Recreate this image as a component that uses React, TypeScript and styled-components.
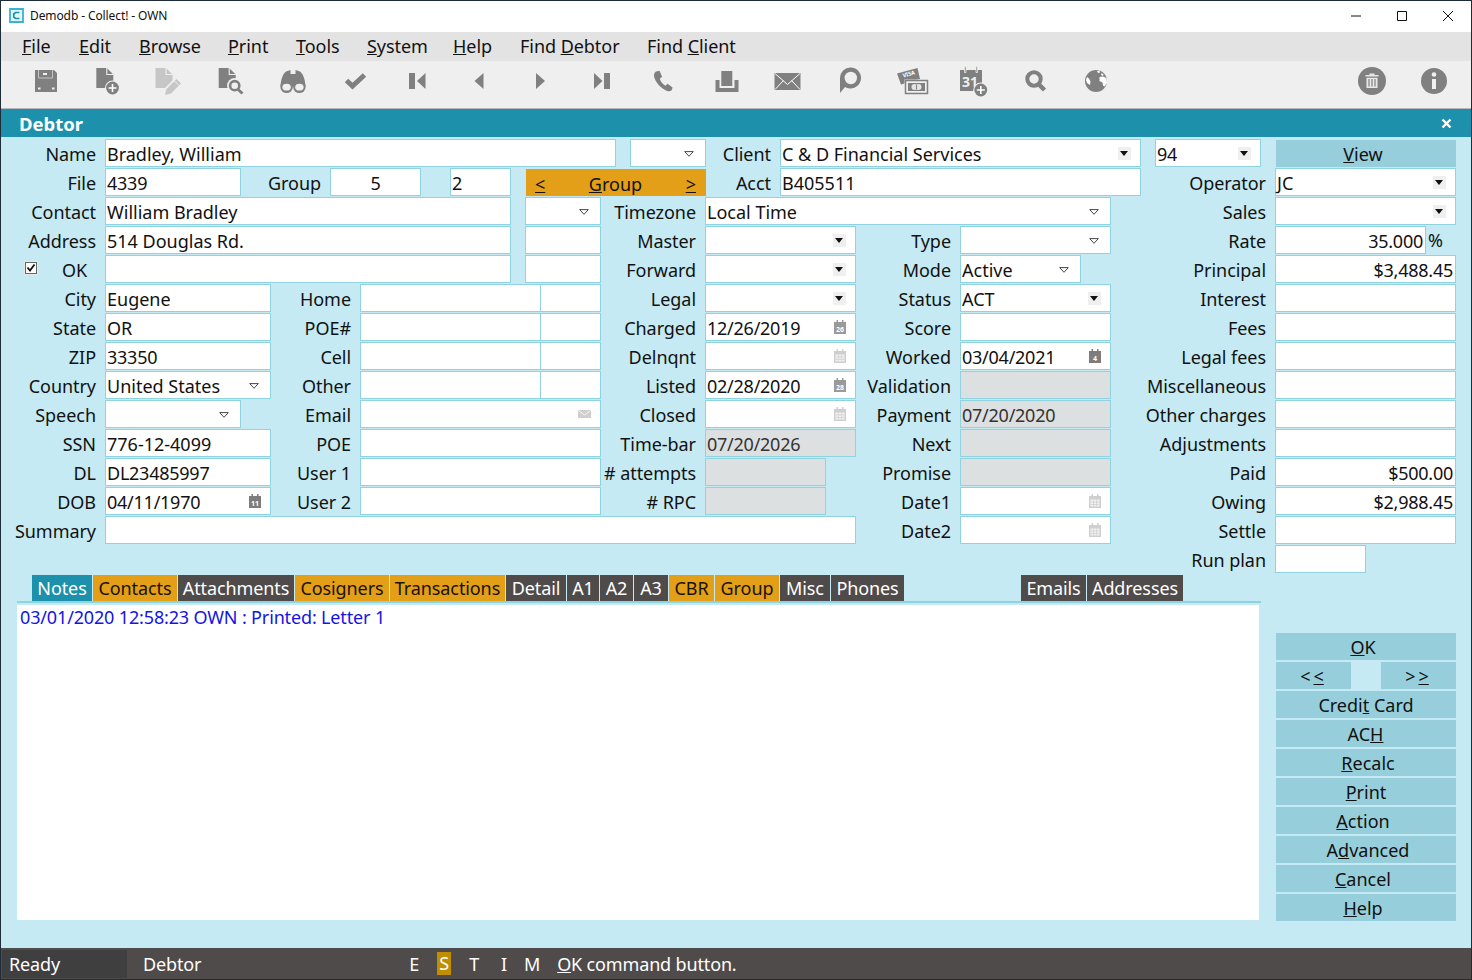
import React from 'react'
import styled, { createGlobalStyle } from 'styled-components'

const GlobalStyle = createGlobalStyle`
	html, body {
		margin: 0;
		padding: 0;
		background: #c5eaf3;
		font-family: "Noto Sans", "Open Sans", sans-serif;
	}
`

const ICON = `#808080`
const ICON_BG = `#efefef`
const FIELD_LINE = `#8ed3df`
const ORANGE = `#e39f17`
const TEAL = `#1d91ab`
const DARK = `#4f4b4a`

const WindowFrame = styled.div`
	width: 1472px;
	height: 980px;
	box-sizing: border-box;
	border: 1px solid #1f2d3a;
	border-bottom: 1px solid #2a2a2a;
	display: flex;
	flex-direction: column;
	overflow: hidden;
	font-size: 18px;
	color: #111;
`

const TitleBar = styled.div`
	height: 31px;
	box-sizing: border-box;
	flex-shrink: 0;
	background: #fff;
	display: flex;
	align-items: center;
	padding: 0 0 2px 8px;
	font-size: 12px;
	letter-spacing: -0.1px;
	color: #111;
`

const AppName = styled.span`
	margin-left: 6px;
	flex: 1;
`

const WindowControl = styled.div`
	width: 46px;
	height: 29px;
	display: flex;
	align-items: center;
	justify-content: center;
`

const MenuBar = styled.div`
	height: 29px;
	box-sizing: border-box;
	flex-shrink: 0;
	background: #e3e3e3;
	display: flex;
	align-items: center;
	padding: 0 0 2px 21px;
	letter-spacing: -0.05px;
`

const MenuItem = styled.span<{ $w: number }>`
	width: ${({ $w }) => $w}px;
	flex-shrink: 0;
	white-space: nowrap;
`

const Toolbar = styled.div`
	height: 47px;
	box-sizing: content-box;
	flex-shrink: 0;
	background: ${ICON_BG};
	border-bottom: 1px solid #b9b4bd;
	display: flex;
	align-items: flex-start;
	padding-left: 14px;
	padding-right: 6px;
`

const ToolButton = styled.div`
	width: 61.8px;
	height: 36px;
	margin-top: 2px;
	display: flex;
	justify-content: center;
	flex-shrink: 0;
`

const ToolSpacer = styled.div`
	flex: 1;
`

const DialogHead = styled.div`
	height: 28px;
	flex-shrink: 0;
	background: ${TEAL};
	color: #fff;
	font-weight: 700;
	font-size: 18.5px;
	display: flex;
	align-items: center;
	justify-content: space-between;
	padding: 0 19px 0 18px;
`

const Dialog = styled.div`
	flex: 1;
	min-height: 0;
	background: #c5eaf3;
	padding-top: 2px;
	display: flex;
	flex-direction: column;
`

const FormRow = styled.div`
	height: 28px;
	margin-bottom: 1px;
	display: flex;
	flex-shrink: 0;
`

const Label = styled.div<{ $w: number }>`
	width: ${({ $w }) => $w}px;
	flex-shrink: 0;
	text-align: right;
	line-height: 31px;
	white-space: nowrap;
	letter-spacing: -0.05px;
	display: flex;
	justify-content: flex-end;
`

const Field = styled.div<{
	$w: number
	$ml: number
	$grey?: boolean
	$right?: boolean
	$center?: boolean
	$tight?: boolean
}>`
	position: relative;
	box-sizing: border-box;
	flex-shrink: 0;
	width: ${({ $w }) => $w}px;
	height: 28px;
	margin-left: ${({ $ml }) => $ml}px;
	background: ${({ $grey }) => ($grey ? `#dde0e0` : `#fff`)};
	color: ${({ $grey }) => ($grey ? `#333` : `#111`)};
	border: 1px solid ${FIELD_LINE};
	padding: 0 ${({ $right }) => ($right ? `2px` : `1px`)} 0 1px;
	line-height: 29px;
	white-space: nowrap;
	letter-spacing: ${({ $tight }) => ($tight ? `-0.25px` : `0`)};
	text-align: ${({ $right, $center }) => ($right ? `right` : $center ? `center` : `left`)};
`

const SolidDrop = styled.span`
	position: absolute;
	right: 9px;
	top: 7px;
	width: 13px;
	height: 13px;
	background: #efefef;

	&::after {
		content: '';
		position: absolute;
		left: 2px;
		top: 4px;
		border-left: 4px solid transparent;
		border-right: 4px solid transparent;
		border-top: 5px solid #111;
	}
`

const FieldIcon = styled.svg<{ $right: number }>`
	position: absolute;
	right: ${({ $right }) => $right}px;
	top: 6px;
`

const HollowDrop = styled.svg`
	position: absolute;
	right: 11px;
	top: 11px;
`

const PercentSign = styled.span`
	line-height: 29px;
	margin-left: 2px;
`

const CheckBox = styled.div<{ $ml: number }>`
	width: 12px;
	height: 12px;
	margin-left: ${({ $ml }) => $ml}px;
	margin-top: 7px;
	flex-shrink: 0;
	box-sizing: border-box;
	background: #fff;
	border: 1px solid #666;
	outline: 1px solid #e8e8e8;
	display: flex;
	align-items: center;
	justify-content: center;
`

const FlatButton = styled.div<{ $w: number; $ml?: number; $nudge?: number }>`
	box-sizing: border-box;
	width: ${({ $w }) => $w}px;
	margin-left: ${({ $ml }) => $ml ?? 0}px;
	flex-shrink: 0;
	height: 27px;
	margin-top: 1px;
	background: #96cfdb;
	text-align: center;
	line-height: 29px;
	color: #111;
	padding-left: ${({ $nudge }) => Math.max($nudge ?? 0, 0)}px;
	padding-right: ${({ $nudge }) => Math.max(-($nudge ?? 0), 0)}px;
`

const SpacedKey = styled.u`
	margin-left: 3px;
`

const GroupButton = styled.div<{ $w: number; $ml: number }>`
	box-sizing: border-box;
	width: ${({ $w }) => $w}px;
	margin-left: ${({ $ml }) => $ml}px;
	flex-shrink: 0;
	height: 27px;
	margin-top: 1px;
	background: ${ORANGE};
	display: flex;
	justify-content: space-between;
	padding: 0 10px 0 9px;
	line-height: 30px;
`

const Lower = styled.div`
	display: flex;
	padding-left: 16px;
`

const NotesColumn = styled.div`
	width: 1244px;
	flex-shrink: 0;
	display: flex;
	flex-direction: column;
`

const TabStrip = styled.div`
	height: 26px;
	margin-top: 1px;
	padding-left: 15px;
	display: flex;
	gap: 1px;
	border-bottom: 2px solid ${FIELD_LINE};
`

const Tab = styled.div<{ $w: number; $tone: 'teal' | 'orange' | 'dark'; $ml?: number }>`
	width: ${({ $w }) => $w}px;
	margin-left: ${({ $ml }) => $ml ?? 0}px;
	flex-shrink: 0;
	text-align: center;
	line-height: 27px;
	white-space: nowrap;
	letter-spacing: -0.1px;
	background: ${({ $tone }) => ($tone === `teal` ? TEAL : $tone === `orange` ? ORANGE : DARK)};
	color: ${({ $tone }) => ($tone === `orange` ? `#1a1200` : `#fff`)};
`

const NotesBox = styled.div`
	margin-top: 2px;
	width: 1242px;
	height: 315px;
	background: #fff;
	color: #1414e6;
	padding: 0 3px;
	box-sizing: border-box;
	line-height: 25px;
	letter-spacing: -0.15px;
`

const ActionColumn = styled.div`
	width: 180px;
	margin-left: 15px;
	padding-top: 58px;
	display: flex;
	flex-direction: column;
	gap: 1px;
`

const ActionPair = styled.div`
	display: flex;
	justify-content: space-between;
`

const StatusBar = styled.div`
	height: 31px;
	flex-shrink: 0;
	background: ${DARK};
	color: #fff;
	display: flex;
	align-items: center;
	padding-left: 1px;
	letter-spacing: -0.15px;
`

const StatusReady = styled.div`
	width: 118px;
	height: 28px;
	background: #3f3f3f;
	padding-left: 7px;
	line-height: 29px;
`

const StatusText = styled.span<{ $x: number }>`
	margin-left: ${({ $x }) => $x}px;
	white-space: nowrap;
`

const StatusFlag = styled.span`
	margin-left: 18px;
	width: 14px;
	height: 23px;
	line-height: 23px;
	text-align: center;
	background: #c18e00;
`

const ToolIcon: React.FC<{ children: React.ReactNode }> = ({ children }) => (
	<svg width="36" height="36" viewBox="0 0 36 36">
		{children}
	</svg>
)

const PlusBadge: React.FC<{ x: number; y: number }> = ({ x, y }) => (
	<>
		<circle cx={x} cy={y} r="7.6" fill={ICON_BG} />
		<circle cx={x} cy={y} r="6.4" fill={ICON} />
		<path d={`M${x - 4} ${y}h8M${x} ${y - 4}v8`} stroke="#fff" strokeWidth="1.6" />
	</>
)

const DocShape: React.FC<{ x: number; fill: string }> = ({ x, fill }) => (
	<>
		<path d={`M${x} 5h10.5l6.5 6.5V25H${x}z`} fill={fill} />
		<path d={`M${x + 10.5} 5v6.5H${x + 17}`} fill="none" stroke={ICON_BG} strokeWidth="1.1" />
	</>
)

const toolIcons: React.ReactNode[] = [
	<>
		<path d="M7 7h19l3 3v19H7z" fill={ICON} />
		<path d="M10.500 7v8h14V7" fill="none" stroke="#c4c4c4" strokeWidth="1" />
		<path d="M15 10h4v2h-4z" fill={ICON_BG} />
		<path d="M10 24.500h2.500v2H10zM24 24.500h2.500v2H24z" fill={ICON_BG} />
	</>,
	<>
		<DocShape x={6.3} fill={ICON} />
		<PlusBadge x={22.5} y={25} />
	</>,
	<>
		<DocShape x={4.5} fill="#c6c6c6" />
		<path d="M12 34l1.500-8.500 12-12 6.500 6.500-12 12z" fill={ICON_BG} />
		<path d="M14 32l1.500-6L25.500 16l4.500 4.500L20 30.500z" fill="#c6c6c6" />
		<path d="M23.500 18l4.500 4.500" stroke={ICON_BG} strokeWidth="0.900" />
	</>,
	<>
		<DocShape x={5.7} fill={ICON} />
		<circle cx="21.7" cy="22.700" r="7.600" fill={ICON_BG} />
		<circle cx="21.7" cy="22.700" r="4.600" fill={ICON_BG} stroke={ICON} strokeWidth="2.600" />
		<path d="M25 26.500l4.500 4" stroke={ICON} strokeWidth="3" />
	</>,
	<>
		<path
			d="M5.500 23C6 16 8 10.500 11 8.500L15.500 7v4h5V7L25 8.500c3 2 5 7.500 5.500 14.500z"
			fill={ICON}
		/>
		<circle cx="11.600" cy="23.700" r="6.300" fill={ICON} />
		<circle cx="24.400" cy="23.700" r="6.300" fill={ICON} />
		<ellipse cx="11.600" cy="24.200" rx="4.200" ry="3.400" fill={ICON_BG} />
		<ellipse cx="24.400" cy="24.200" rx="4.200" ry="3.400" fill={ICON_BG} />
	</>,
	<path d="M9.500 17.500l6 5.500L27.500 12" fill="none" stroke={ICON} strokeWidth="5" />,
	<path d="M10 10h6v16h-6zM26.500 10v16L18 18z" fill={ICON} />,
	<path d="M23.500 10v16L14.500 18z" fill={ICON} />,
	<path d="M14 10v16l9-8z" fill={ICON} />,
	<path d="M10 10v16l8.5-8zM20 10h6v16h-6z" fill={ICON} />,
	<path
		d="M10 8.5l3.5-.7 2.6 6-2.3 2c1 3 3.2 5.8 5.6 7l2.2-2 5 3.6-.9 2.8c-1.1 1-3 1.2-4.6.7C14.500 25.200 8.600 18.400 8 13c-.2-2 .6-3.500 2-4.500z"
		fill={ICON}
	/>,
	<path d="M13.300 8h11v15h-11zM7.500 17h4v8h15v-8h4v12h-23z" fill={ICON} />,
	<>
		<path d="M5.500 10h26v17h-26z" fill={ICON} />
		<path d="M6 10.500l12.500 11 12.500-11M6 26.500l8.500-9M31 26.500l-8.500-9" fill="none" stroke="#fff" strokeWidth="1" />
	</>,
	<>
		<path d="M19.500 4.500a10.500 10.500 0 1 1-5.500 19.400L9 30V15A10.500 10.500 0 0 1 19.500 4.500z" fill={ICON} />
		<circle cx="19.800" cy="15" r="6.200" fill={ICON_BG} />
	</>,
	<>
		<path d="M4 10.500L24.500 5l2.500 11-19 5.500z" fill={ICON} />
		<text x="10" y="14.500" fontSize="5.500" fontWeight="700" fill="#fff" transform="rotate(-15 10 14)">
			VISA
		</text>
		<path d="M11.500 16.500h24v15h-24z" fill={ICON_BG} />
		<path d="M12.500 17.500h22v13h-22z" fill="none" stroke={ICON} strokeWidth="1.500" />
		<path d="M15 20h17v8H15z" fill={ICON} />
		<circle cx="21.500" cy="24" r="3" fill="#e4e4e4" />
		<circle cx="25.500" cy="24" r="3" fill="#e4e4e4" />
		<path d="M23.500 21.800v4.400" stroke={ICON} strokeWidth="1" />
	</>,
	<>
		<path d="M5 7h22v21H5z" fill={ICON} />
		<path d="M9.500 3.500h1.500v6H9.500zM21 3.500h1.500v6H21z" fill={ICON} stroke={ICON_BG} strokeWidth="0.800" />
		<text x="7" y="24" fontSize="14" fontWeight="700" fill={ICON_BG}>
			31
		</text>
		<PlusBadge x={25.800} y={27} />
	</>,
	<>
		<circle cx="17" cy="16" r="6.700" fill="none" stroke={ICON} strokeWidth="4" />
		<path d="M21.500 21l6 6" stroke={ICON} strokeWidth="4.500" />
	</>,
	<>
		<circle cx="18" cy="18" r="11" fill={ICON} />
		<path
			d="M19 8l2.500-.5.500 2-2 .5zM23.500 10l2 1.500-.5 1.500-2-1zM21.500 14l3.500-.5 3.500 1.500.5 5-2.500 3.500-1.500-1-.5-3-3-1.500zM9 14l2 1.500 1.500 3L12 22l-3-2-1-3z"
			fill="#fff"
		/>
	</>,
]

const TrashIcon = (
	<ToolIcon>
		<circle cx="18" cy="18" r="14" fill={ICON} />
		<path d="M11.500 12h13v1.600h-13zM15.500 10.400h5V12h-5z" fill="#e8e8e8" />
		<path d="M12.500 14.800h11V25h-11z" fill="#e8e8e8" />
		<path d="M15 16v7.500M18 16v7.500M21 16v7.500" stroke={ICON} strokeWidth="1.200" />
	</ToolIcon>
)

const InfoIcon = (
	<ToolIcon>
		<circle cx="18" cy="18" r="13" fill={ICON} />
		<circle cx="18" cy="11.500" r="2.300" fill="#f0f0f0" />
		<path d="M16 16h4v10h-4z" fill="#f0f0f0" />
	</ToolIcon>
)

const Calendar: React.FC<{ day?: string; dark?: boolean }> = ({ day, dark }) => {
	const tone = dark ? `#7d7d7d` : day ? `#9a9a9a` : `#cfcfcf`
	return (
		<FieldIcon $right={9} width="12" height="14" viewBox="0 0 12 14">
			<path d="M0 2h12v12H0z" fill={tone} />
			<path d="M2.500 0h1.500v3H2.500zM8 0h1.500v3H8z" fill={tone} />
			{day ? (
				<text x="6" y="12" textAnchor="middle" fontSize="7" fontWeight="700" fill="#fff" letterSpacing="0">
					{day}
				</text>
			) : (
				<path d="M1.500 5.500h9v7h-9z" fill="#f1f1f1" />
			)}
			{!day && <path d="M1.500 8h9M1.500 10.500h9M4.500 5.500v7M7.500 5.500v7" stroke={tone} strokeWidth="0.700" />}
		</FieldIcon>
	)
}

const Envelope = (
	<FieldIcon $right={9} width="13" height="14" viewBox="0 0 13 14">
		<path d="M0 3h13v8H0z" fill="#cfcfcf" />
		<path d="M.500 3.500l6 4.500 6-4.500" fill="none" stroke="#fff" strokeWidth="0.800" />
	</FieldIcon>
)

const Hollow = (
	<HollowDrop width="10" height="6" viewBox="0 0 10 6">
		<path d="M.700.600h8.600L5 5.300z" fill="#fff" stroke="#333" strokeWidth="0.900" />
	</HollowDrop>
)

type CellDef =
	| { kind: 'label'; end: number; text: string }
	| {
			kind: 'field'
			from: number
			to: number
			text?: string
			grey?: boolean
			right?: boolean
			center?: boolean
			extra?: React.ReactNode
	  }
	| { kind: 'check'; from: number }
	| { kind: 'view'; from: number; to: number }
	| { kind: 'group'; from: number; to: number }
	| { kind: 'percent' }

const L = (text: string, end: number): CellDef => ({ kind: 'label', text, end })
const F = (from: number, to: number, text = ``, extra?: React.ReactNode): CellDef => ({
	kind: 'field',
	from,
	to,
	text,
	extra,
})
const G = (from: number, to: number, text = ``): CellDef => ({ kind: 'field', from, to, text, grey: true })
const M = (from: number, to: number, text = ``): CellDef => ({ kind: 'field', from, to, text, right: true })

const solid = <SolidDrop />

const rows: CellDef[][] = [
	[
		L(`Name`, 96),
		F(105, 616, `Bradley, William`),
		F(630, 706, ``, Hollow),
		L(`Client`, 771),
		F(780, 1141, `C & D Financial Services`, solid),
		F(1155, 1261, `94`, solid),
		{ kind: 'view', from: 1276, to: 1456 },
	],
	[
		L(`File`, 96),
		F(105, 241, `4339`),
		L(`Group`, 321),
		{ kind: 'field', from: 330, to: 421, text: `5`, center: true },
		F(450, 511, `2`),
		{ kind: 'group', from: 526, to: 706 },
		L(`Acct`, 771),
		F(780, 1141, `B405511`),
		L(`Operator`, 1266),
		F(1275, 1456, `JC`, solid),
	],
	[
		L(`Contact`, 96),
		F(105, 511, `William Bradley`),
		F(525, 601, ``, Hollow),
		L(`Timezone`, 696),
		F(705, 1111, `Local Time`, Hollow),
		L(`Sales`, 1266),
		F(1275, 1456, ``, solid),
	],
	[
		L(`Address`, 96),
		F(105, 511, `514 Douglas Rd.`),
		F(525, 601),
		L(`Master`, 696),
		F(705, 856, ``, solid),
		L(`Type`, 951),
		F(960, 1111, ``, Hollow),
		L(`Rate`, 1266),
		M(1275, 1426, `35.000`),
		{ kind: 'percent' },
	],
	[
		{ kind: 'check', from: 25 },
		L(`OK`, 87),
		F(105, 511),
		F(525, 601),
		L(`Forward`, 696),
		F(705, 856, ``, solid),
		L(`Mode`, 951),
		F(960, 1081, `Active`, Hollow),
		L(`Principal`, 1266),
		M(1275, 1456, `$3,488.45`),
	],
	[
		L(`City`, 96),
		F(105, 271, `Eugene`),
		L(`Home`, 351),
		F(360, 541),
		F(540, 601),
		L(`Legal`, 696),
		F(705, 856, ``, solid),
		L(`Status`, 951),
		F(960, 1111, `ACT`, solid),
		L(`Interest`, 1266),
		F(1275, 1456),
	],
	[
		L(`State`, 96),
		F(105, 271, `OR`),
		L(`POE#`, 351),
		F(360, 541),
		F(540, 601),
		L(`Charged`, 696),
		F(705, 856, `12/26/2019`, <Calendar day="26" />),
		L(`Score`, 951),
		F(960, 1111),
		L(`Fees`, 1266),
		F(1275, 1456),
	],
	[
		L(`ZIP`, 96),
		F(105, 271, `33350`),
		L(`Cell`, 351),
		F(360, 541),
		F(540, 601),
		L(`Delnqnt`, 696),
		F(705, 856, ``, <Calendar />),
		L(`Worked`, 951),
		F(960, 1111, `03/04/2021`, <Calendar day="4" dark />),
		L(`Legal fees`, 1266),
		F(1275, 1456),
	],
	[
		L(`Country`, 96),
		F(105, 271, `United States`, Hollow),
		L(`Other`, 351),
		F(360, 541),
		F(540, 601),
		L(`Listed`, 696),
		F(705, 856, `02/28/2020`, <Calendar day="28" />),
		L(`Validation`, 951),
		G(960, 1111),
		L(`Miscellaneous`, 1266),
		F(1275, 1456),
	],
	[
		L(`Speech`, 96),
		F(105, 241, ``, Hollow),
		L(`Email`, 351),
		F(360, 601, ``, Envelope),
		L(`Closed`, 696),
		F(705, 856, ``, <Calendar />),
		L(`Payment`, 951),
		G(960, 1111, `07/20/2020`),
		L(`Other charges`, 1266),
		F(1275, 1456),
	],
	[
		L(`SSN`, 96),
		F(105, 271, `776-12-4099`),
		L(`POE`, 351),
		F(360, 601),
		L(`Time-bar`, 696),
		G(705, 856, `07/20/2026`),
		L(`Next`, 951),
		G(960, 1111),
		L(`Adjustments`, 1266),
		F(1275, 1456),
	],
	[
		L(`DL`, 96),
		F(105, 271, `DL23485997`),
		L(`User 1`, 351),
		F(360, 601),
		L(`# attempts`, 696),
		G(705, 826),
		L(`Promise`, 951),
		G(960, 1111),
		L(`Paid`, 1266),
		M(1275, 1456, `$500.00`),
	],
	[
		L(`DOB`, 96),
		F(105, 271, `04/11/1970`, <Calendar day="11" dark />),
		L(`User 2`, 351),
		F(360, 601),
		L(`# RPC`, 696),
		G(705, 826),
		L(`Date1`, 951),
		F(960, 1111, ``, <Calendar />),
		L(`Owing`, 1266),
		M(1275, 1456, `$2,988.45`),
	],
	[
		L(`Summary`, 96),
		F(105, 856),
		L(`Date2`, 951),
		F(960, 1111, ``, <Calendar />),
		L(`Settle`, 1266),
		F(1275, 1456),
	],
	[L(`Run plan`, 1266), F(1275, 1366)],
]

// Noto digits run wider than the original UI font, letters do not
const isNumeric = (text?: string): boolean => !!text && /^[\dDL/$,.]+$/.test(text)

// cells are listed by their x on the form, widths come from the running cursor
const renderRow = (cells: CellDef[], rowIndex: number): React.ReactNode => {
	let cursor = 1
	return (
		<FormRow key={rowIndex}>
			{cells.map((cell, i) => {
				const start = cursor
				if (cell.kind === 'label') {
					cursor = cell.end
					return (
						<Label key={i} $w={cell.end - start}>
							{cell.text}
						</Label>
					)
				}
				if (cell.kind === 'check') {
					cursor = cell.from + 12
					return (
						<CheckBox key={i} $ml={cell.from - start}>
							<svg width="10" height="10" viewBox="0 0 10 10">
								<path d="M1.500 4.500l2.500 3 4.500-6" fill="none" stroke="#111" strokeWidth="1.800" />
							</svg>
						</CheckBox>
					)
				}
				if (cell.kind === 'percent') {
					return <PercentSign key={i}>%</PercentSign>
				}
				cursor = cell.to
				if (cell.kind === 'view') {
					return (
						<FlatButton key={i} $w={cell.to - cell.from} $ml={cell.from - start} $nudge={-6}>
							<u>V</u>iew
						</FlatButton>
					)
				}
				if (cell.kind === 'group') {
					return (
						<GroupButton key={i} $w={cell.to - cell.from} $ml={cell.from - start}>
							<u>&lt;</u>
							<span>
								<u>G</u>roup
							</span>
							<u>&gt;</u>
						</GroupButton>
					)
				}
				return (
					<Field
						key={i}
						$w={cell.to - cell.from}
						$ml={cell.from - start}
						$grey={cell.grey}
						$right={cell.right}
						$center={cell.center}
						$tight={isNumeric(cell.text)}
					>
						{cell.text}
						{cell.extra}
					</Field>
				)
			})}
		</FormRow>
	)
}

const menu: [React.ReactNode, number][] = [
	[<><u>F</u>ile</>, 57],
	[<><u>E</u>dit</>, 60],
	[<><u>B</u>rowse</>, 89],
	[<><u>P</u>rint</>, 68],
	[<><u>T</u>ools</>, 71],
	[<><u>S</u>ystem</>, 86],
	[<><u>H</u>elp</>, 67],
	[<>Find <u>D</u>ebtor</>, 127],
	[<>Find <u>C</u>lient</>, 110],
]

const tabs: { text: string; w: number; tone: 'teal' | 'orange' | 'dark'; ml?: number }[] = [
	{ text: `Notes`, w: 60, tone: `teal` },
	{ text: `Contacts`, w: 84, tone: `orange` },
	{ text: `Attachments`, w: 116, tone: `dark` },
	{ text: `Cosigners`, w: 94, tone: `orange` },
	{ text: `Transactions`, w: 115, tone: `orange` },
	{ text: `Detail`, w: 60, tone: `dark` },
	{ text: `A1`, w: 32, tone: `dark` },
	{ text: `A2`, w: 33, tone: `dark` },
	{ text: `A3`, w: 34, tone: `dark` },
	{ text: `CBR`, w: 45, tone: `orange` },
	{ text: `Group`, w: 64, tone: `orange` },
	{ text: `Misc`, w: 50, tone: `dark` },
	{ text: `Phones`, w: 73, tone: `dark` },
	{ text: `Emails`, w: 65, tone: `dark`, ml: 116 },
	{ text: `Addresses`, w: 96, tone: `dark` },
]

// the text sits off centre on most of these buttons in the original
const actions: [React.ReactNode, number][] = [
	[<>Credi<u>t</u> Card</>, 0],
	[<>AC<u>H</u></>, -1],
	[<><u>R</u>ecalc</>, 4],
	[<><u>P</u>rint</>, 0],
	[<><u>A</u>ction</>, -6],
	[<>A<u>d</u>vanced</>, 4],
	[<><u>C</u>ancel</>, -6],
	[<><u>H</u>elp</>, -6],
]

export default function App(): React.ReactElement {
	return (
		<>
			<GlobalStyle />
			<WindowFrame>
				<TitleBar>
					<svg width="15" height="15" viewBox="0 0 15 15">
						<path d="M1 1h13v13H1z" fill="#e4f6fa" stroke="#37b4cf" strokeWidth="1.800" />
						<path d="M10.500 4.500H6.500L4.800 6v3l1.700 1.500h4" fill="none" stroke="#1d91ab" strokeWidth="1.700" />
					</svg>
					<AppName>Demodb - Collect! - OWN</AppName>
					<WindowControl>
						<svg width="12" height="12" viewBox="0 0 12 12">
							<path d="M1 6h10" stroke="#111" strokeWidth="1" />
						</svg>
					</WindowControl>
					<WindowControl>
						<svg width="12" height="12" viewBox="0 0 12 12">
							<path d="M1.500 1.500h9v9h-9z" fill="none" stroke="#111" strokeWidth="1" />
						</svg>
					</WindowControl>
					<WindowControl>
						<svg width="12" height="12" viewBox="0 0 12 12">
							<path d="M1 1l10 10M11 1L1 11" stroke="#111" strokeWidth="1" />
						</svg>
					</WindowControl>
				</TitleBar>
				<MenuBar>
					{menu.map(([label, w], i) => (
						<MenuItem key={i} $w={w}>
							{label}
						</MenuItem>
					))}
				</MenuBar>
				<Toolbar>
					{toolIcons.map((icon, i) => (
						<ToolButton key={i}>
							<ToolIcon>{icon}</ToolIcon>
						</ToolButton>
					))}
					<ToolSpacer />
					<ToolButton>{TrashIcon}</ToolButton>
					<ToolButton>{InfoIcon}</ToolButton>
				</Toolbar>
				<DialogHead>
					Debtor
					<svg width="11" height="11" viewBox="0 0 11 11">
						<path d="M1.500 1.500l8 8M9.500 1.500l-8 8" stroke="#fff" strokeWidth="2.400" />
					</svg>
				</DialogHead>
				<Dialog>
					{rows.map(renderRow)}
					<Lower>
						<NotesColumn>
							<TabStrip>
								{tabs.map(t => (
									<Tab key={t.text} $w={t.w} $tone={t.tone} $ml={t.ml}>
										{t.text}
									</Tab>
								))}
							</TabStrip>
							<NotesBox>03/01/2020 12:58:23 OWN : Printed: Letter 1</NotesBox>
						</NotesColumn>
						<ActionColumn>
							<FlatButton $w={180} $nudge={-6}>
								<u>O</u>K
							</FlatButton>
							<ActionPair>
								<FlatButton $w={75} $nudge={-3}>
									&lt;<SpacedKey>&lt;</SpacedKey>
								</FlatButton>
								<FlatButton $w={75} $nudge={-3}>
									&gt;<SpacedKey>&gt;</SpacedKey>
								</FlatButton>
							</ActionPair>
							{actions.map(([a, nudge], i) => (
								<FlatButton key={i} $w={180} $nudge={nudge}>
									{a}
								</FlatButton>
							))}
						</ActionColumn>
					</Lower>
				</Dialog>
				<StatusBar>
					<StatusReady>Ready</StatusReady>
					<StatusText $x={16}>Debtor</StatusText>
					<StatusText $x={208}>E</StatusText>
					<StatusFlag>S</StatusFlag>
					<StatusText $x={18}>T</StatusText>
					<StatusText $x={22}>I</StatusText>
					<StatusText $x={17}>M</StatusText>
					<StatusText $x={17}>
						<u>O</u>K command button.
					</StatusText>
				</StatusBar>
			</WindowFrame>
		</>
	)
}
